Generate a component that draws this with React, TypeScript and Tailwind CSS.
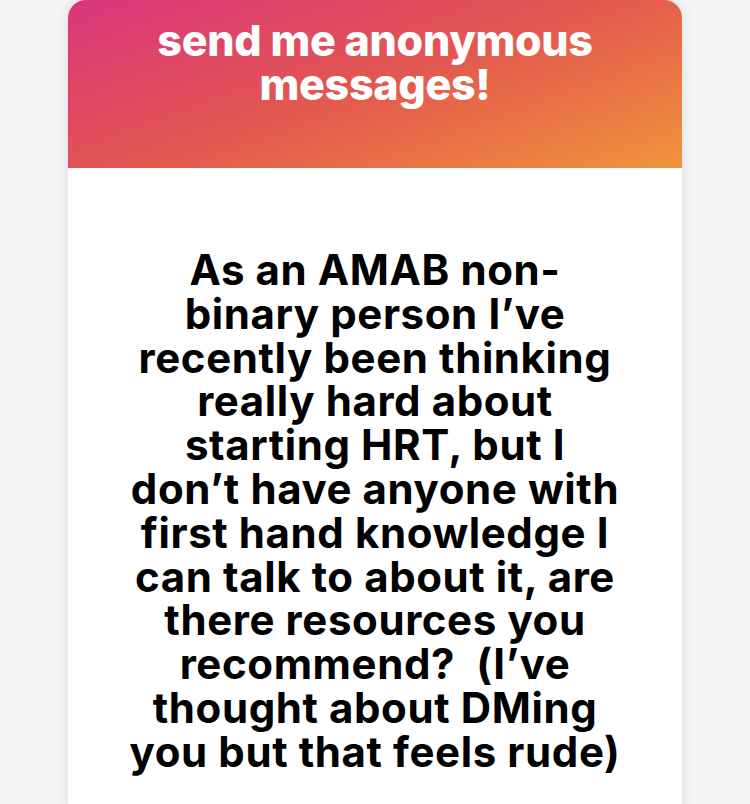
import React from "react";

export default function App() {
  return (
    <div
      className="min-h-[804px] w-full bg-[#f5f5f7] flex justify-center"
      style={{ fontFamily: "Inter, 'Noto Sans', sans-serif" }}
    >
      <div className="w-[614px] bg-white rounded-t-[18px] overflow-hidden shadow-[0_0_14px_rgba(0,0,0,0.10)] flex flex-col">
        <div className="h-[168px] bg-[linear-gradient(160deg,#d8367c_0%,#e3584f_50%,#f0943a_100%)] flex justify-center pt-[18px]">
          <h1 className="text-white font-extrabold text-[43px] leading-[44px] tracking-[-0.3px] text-center">
            send me anonymous
            <br />
            messages!
          </h1>
        </div>
        <div className="flex-1 flex justify-center pt-[80px] pb-10">
          <p className="text-black font-bold text-[42px] leading-[43.8px] tracking-[0.6px] text-center">
            As an AMAB non-
            <br />
            binary person I’ve
            <br />
            recently been thinking
            <br />
            really hard about
            <br />
            starting HRT, but I
            <br />
            don’t have anyone with
            <br />
            first hand knowledge I
            <br />
            can talk to about it, are
            <br />
            there resources you
            <br />
            recommend?&nbsp; (I’ve
            <br />
            thought about DMing
            <br />
            you but that feels rude)
          </p>
        </div>
      </div>
    </div>
  );
}
